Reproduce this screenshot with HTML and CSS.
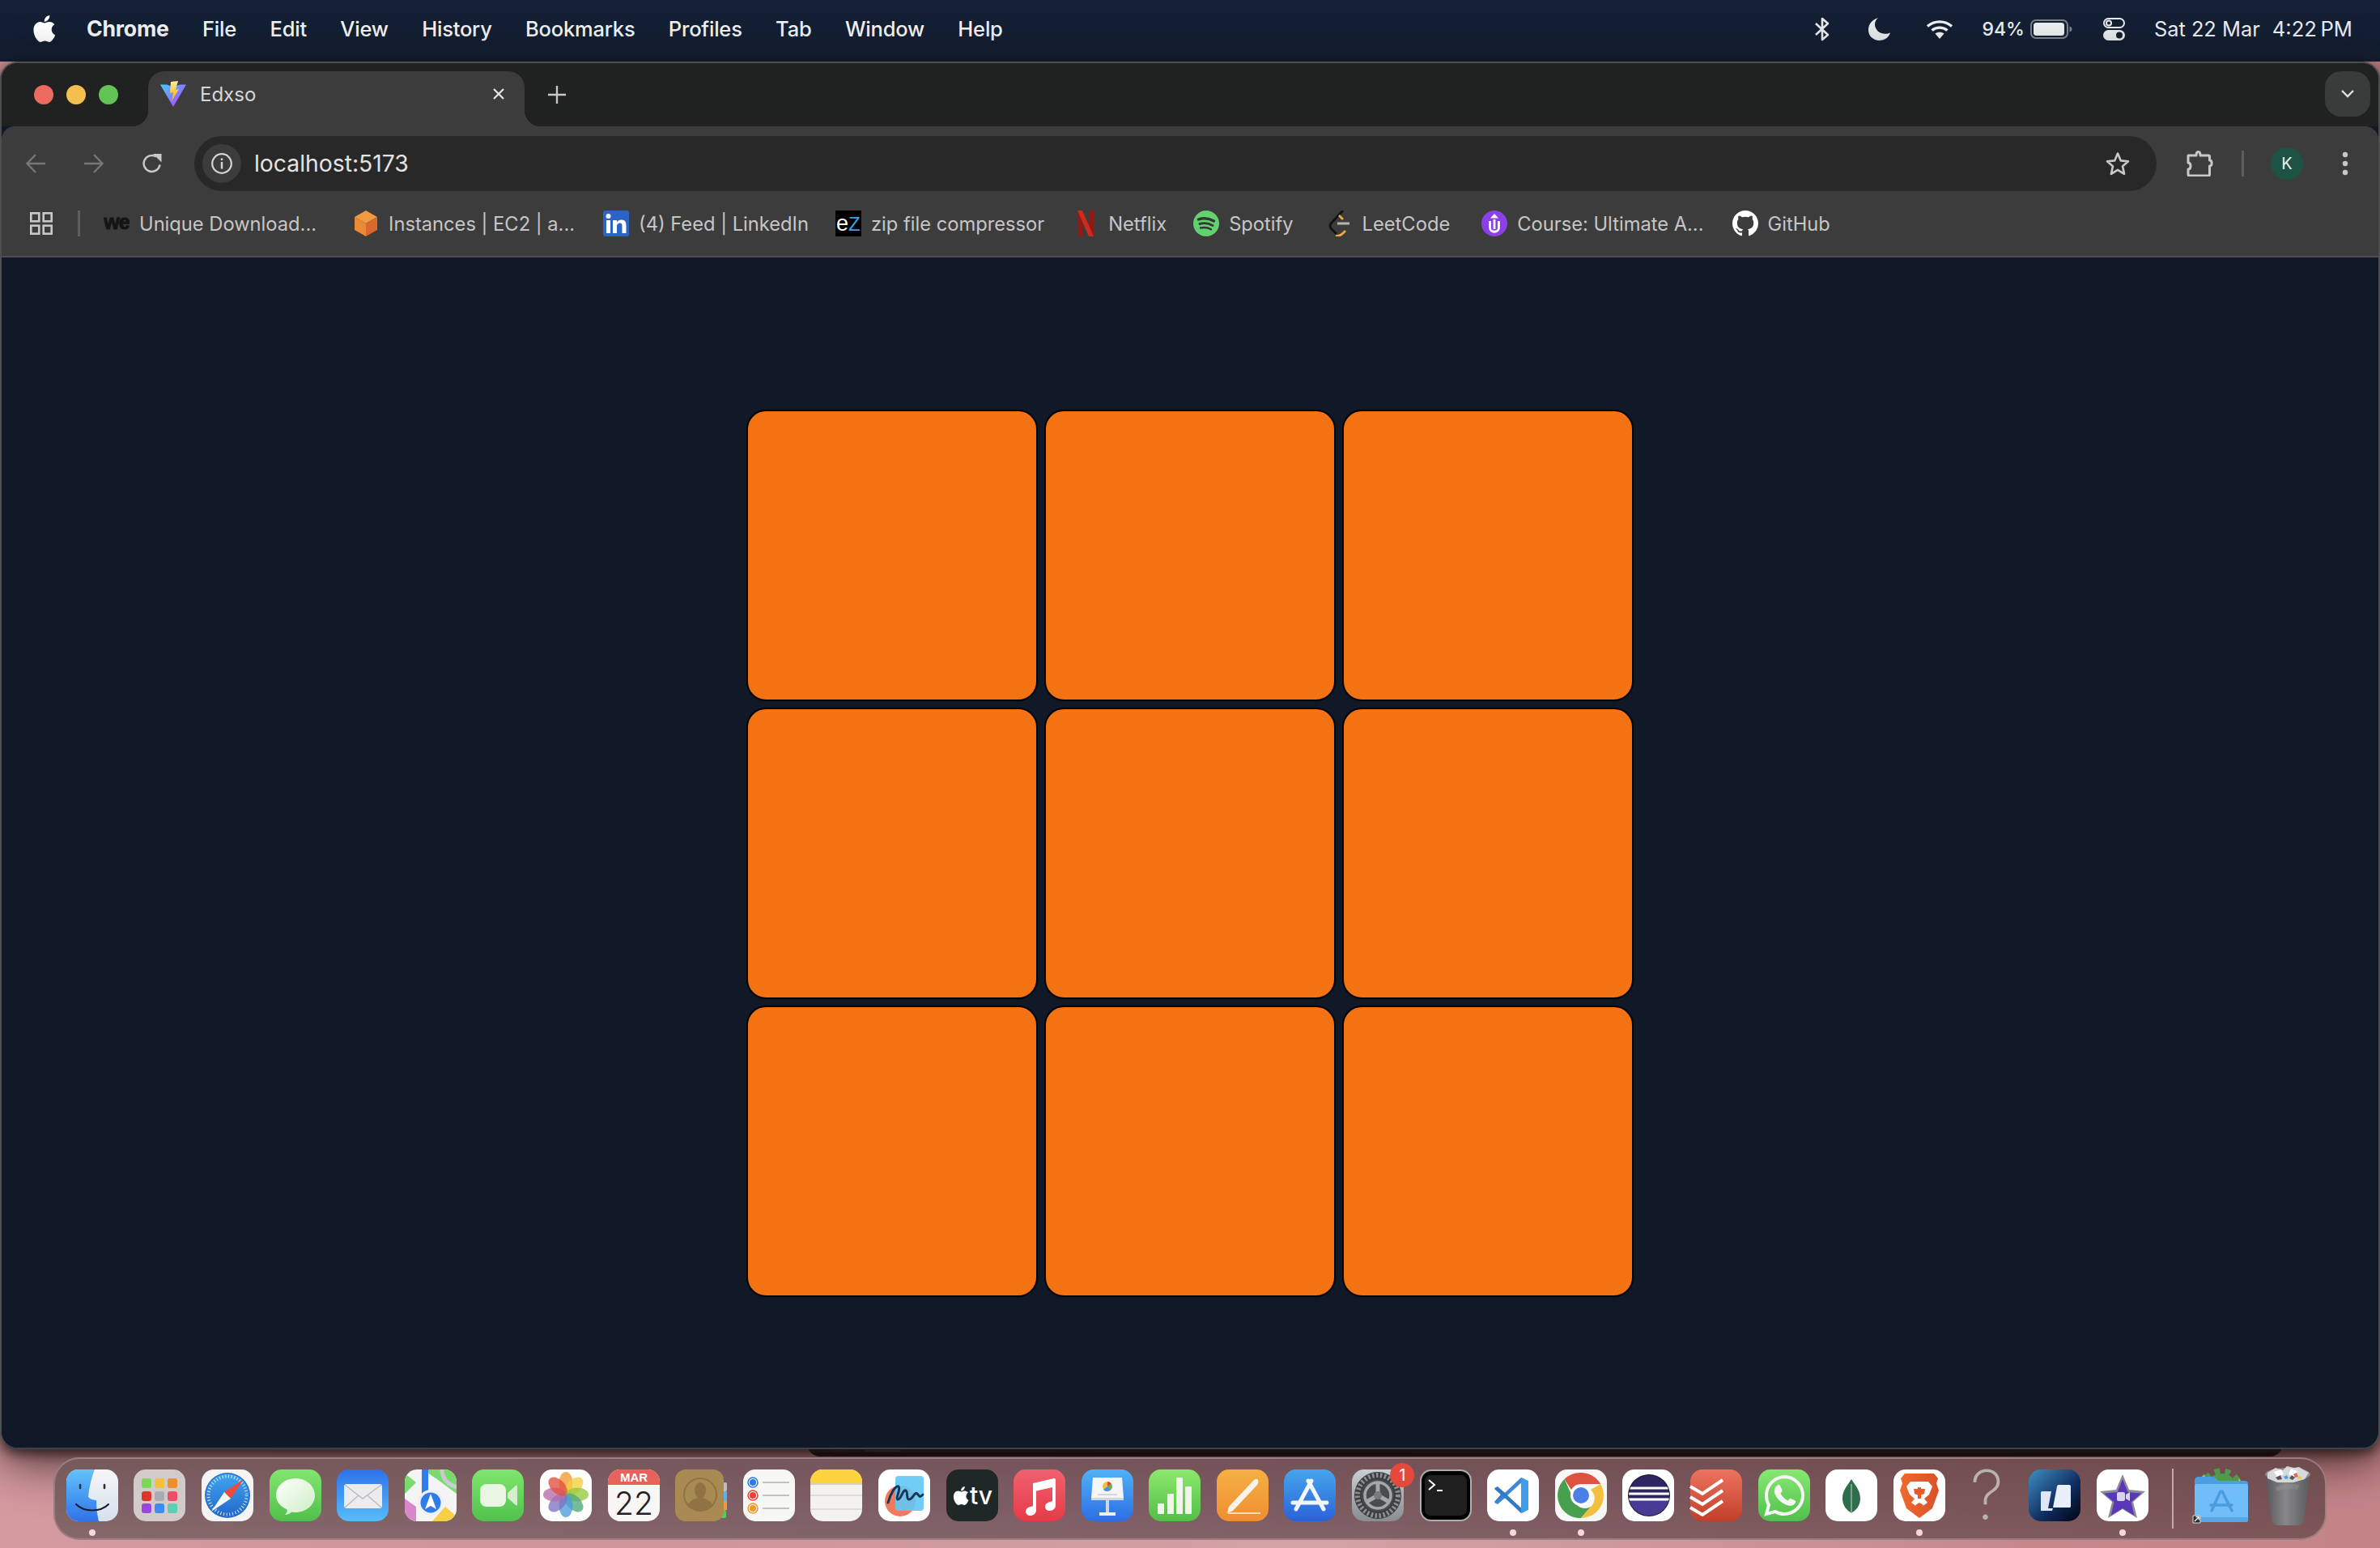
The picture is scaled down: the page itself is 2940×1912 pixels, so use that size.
FILE: index.html
```html
<!DOCTYPE html>
<html lang="en">
<head>
<meta charset="utf-8">
<title>Edxso</title>
<link rel="stylesheet" href="styles.css">
</head>
<body>
<header class="menubar">
  <svg class="apple" viewBox="3.6 2 16.4 20"><path fill="#fff" d="M18.71 19.5c-.83 1.24-1.71 2.45-3.05 2.47-1.34.03-1.77-.79-3.29-.79-1.53 0-2 .77-3.27.82-1.31.05-2.3-1.32-3.14-2.53C4.25 17 2.94 12.45 4.7 9.39c.87-1.52 2.43-2.48 4.12-2.51 1.28-.02 2.5.87 3.29.87.78 0 2.26-1.07 3.81-.91.65.03 2.47.26 3.64 1.98-.09.06-2.17 1.28-2.15 3.81.03 3.02 2.65 4.03 2.68 4.04-.03.07-.42 1.44-1.38 2.83M13 3.5c.73-.83 1.94-1.46 2.94-1.5.13 1.17-.34 2.35-1.04 3.19-.69.85-1.83 1.51-2.95 1.42-.15-1.15.41-2.35 1.05-3.11z"/></svg>
  <nav class="menu">
    <span class="menu-app">Chrome</span><span>File</span><span>Edit</span><span>View</span><span>History</span><span>Bookmarks</span><span>Profiles</span><span>Tab</span><span>Window</span><span>Help</span>
  </nav>
  <div class="status">
    <svg class="st-bt" viewBox="0 0 20 30"><path fill="none" stroke="#e8eaec" stroke-width="2.6" stroke-linejoin="round" d="M2 8l15 14-7 6V2l7 6L2 22"/></svg>
    <svg class="st-moon" viewBox="0 0 28 28"><path fill="#e8eaec" d="M12 0C5 2 0 7.500 0 15c0 7.500 6 13 13.500 13 6.500 0 11.500-3.500 13.500-9.500-2 1-4 1.300-6 1.300C13 19.800 8 14 8 8c0-3 1.500-6 4-8z"/></svg>
    <svg class="st-wifi" viewBox="0 0 34 24"><path fill="none" stroke="#f0f1f3" stroke-width="3.400" d="M2 8.500c8.500-7.500 21.500-7.500 30 0M7.500 13.500c5.500-4.500 13.500-4.500 19 0"/><path fill="#f0f1f3" d="M11.500 17.500c3-2.500 8-2.500 11 0L17 24z"/></svg>
    <span class="st-pct">94%</span>
    <svg class="st-batt" viewBox="0 0 52 24"><rect x="1" y="1" width="45" height="22" rx="6" fill="none" stroke="#7c8490" stroke-width="2"/><rect x="4" y="4" width="38" height="16" rx="3.500" fill="#eceef0"/><path fill="#7c8490" d="M48.500 8.500c2 .5 3 2 3 3.500s-1 3-3 3.500z"/></svg>
    <svg class="st-ctl" viewBox="0 0 28 28"><rect x="1" y="1" width="25" height="11" rx="5.500" fill="none" stroke="#e8eaec" stroke-width="2"/><circle cx="7" cy="6.500" r="3" fill="none" stroke="#e8eaec" stroke-width="2"/><rect y="15" width="27" height="13" rx="6.500" fill="#e8eaec"/><circle cx="20" cy="21.500" r="4" fill="#131f33"/></svg>
    <span class="st-date">Sat 22 Mar</span>
    <span class="st-time">4:22&#8201;PM</span>
  </div>
</header>

<div class="back-window"></div>

<main class="window">
  <div class="tabstrip">
    <div class="lights"><span class="light red"></span><span class="light yellow"></span><span class="light green"></span></div>
    <div class="tab">
      <svg class="fav" viewBox="0 0 32 32"><defs><linearGradient id="v1" x1="0" y1="0" x2="1" y2="1"><stop offset="0" stop-color="#41d1ff"/><stop offset="1" stop-color="#bd34fe"/></linearGradient><linearGradient id="v2" x1="0" y1="0" x2="0" y2="1"><stop offset="0" stop-color="#ffee95"/><stop offset="1" stop-color="#ffa800"/></linearGradient></defs><path fill="url(#v1)" d="M0 4.500l8 0 8 3 8-3 8 0L16 32z"/><path fill="url(#v2)" d="M13 1l9-1-3 11 4-1-9 15 2-11-4 1z"/></svg>
      <span class="tab-title">Edxso</span>
      <svg class="tab-x" viewBox="0 0 16 16"><path stroke="#e6e6e6" stroke-width="2.200" d="M2 2l12 12M14 2L2 14"/></svg>
    </div>
    <svg class="newtab" viewBox="0 0 22 22"><path stroke="#c7c7c7" stroke-width="2.400" d="M11 0v22M0 11h22"/></svg>
    <div class="tabsearch"><svg class="chev" viewBox="0 0 16 10"><path fill="none" stroke="#e0e0e0" stroke-width="2.400" d="M1 1l7 7 7-7"/></svg></div>
  </div>

  <div class="toolbar">
    <svg class="tb-ic" viewBox="0 0 24 24"><path fill="none" stroke="#747575" stroke-width="2.400" d="M24 12H2M12 1L1.500 12 12 23"/></svg>
    <svg class="tb-ic tb-fwd" viewBox="0 0 24 24"><path fill="none" stroke="#747575" stroke-width="2.400" d="M0 12h22M12 1l10.500 11L12 23"/></svg>
    <svg class="tb-ic tb-rel" viewBox="0 0 24 24"><path fill="none" stroke="#c8c8c8" stroke-width="2.500" d="M21.500 13.500A10 10 0 1 1 17 3.500"/><path fill="#c8c8c8" d="M13 0h10.500v10.500z"/></svg>
    <div class="omnibox">
      <div class="info"><svg class="info-ic" viewBox="0 0 26 26"><circle cx="13" cy="13" r="11.800" fill="none" stroke="#d4d4d4" stroke-width="2.200"/><path fill="#d4d4d4" d="M11.800 11h2.400v8.500h-2.400zM11.800 6.500h2.400V9h-2.400z"/></svg></div>
      <span class="url">localhost:5173</span>
      <svg class="star" viewBox="0 0 30 30"><path fill="none" stroke="#c8c8c8" stroke-width="2.600" stroke-linejoin="round" d="M15 2.500l3.800 8.900 9.200.8-7 6.200 2.100 9.400L15 22.800l-8.100 5 2.100-9.400-7-6.200 9.200-.8z"/></svg>
    </div>
    <svg class="ext" viewBox="0 0 33 32"><path fill="none" stroke="#c8c8c8" stroke-width="3" stroke-linejoin="round" d="M2 6h10c0-6 5-6 5 0h10c1 0 1.500.5 1.500 1.500V12c3.500 0 3.500 7 0 7v10.500c0 1-.5 1.500-1.500 1.500H3.500c-1 0-1.500-.5-1.500-1.500V23c4 0 4-8 0-8z"/></svg>
    <span class="tb-sep"></span>
    <span class="avatar">K</span>
    <svg class="kebab" viewBox="0 0 8 30"><circle cx="4" cy="4" r="3.200" fill="#c8c8c8"/><circle cx="4" cy="15" r="3.200" fill="#c8c8c8"/><circle cx="4" cy="26" r="3.200" fill="#c8c8c8"/></svg>
  </div>

  <div class="bookmarks">
    <svg class="bm-apps" viewBox="0 0 28 28"><g fill="none" stroke="#c8c8c8" stroke-width="2.600"><rect x="1.300" y="1.300" width="10" height="10"/><rect x="16.700" y="1.300" width="10" height="10"/><rect x="1.300" y="16.700" width="10" height="10"/><rect x="16.700" y="16.700" width="10" height="10"/></g></svg>
    <span class="bm-sep"></span>
    <a class="bm bm-first"><svg class="bm-ic" viewBox="0 0 32 32"><text x="16" y="23" class="fv-we">we</text></svg><span>Unique Download...</span></a>
    <a class="bm bm-wide"><svg class="bm-ic" viewBox="0 0 32 32"><path fill="#f19a40" d="M16 0l14 8-14 8L2 8z"/><path fill="#e98a37" d="M2 8l14 8v16L2 24z"/><path fill="#d9682a" d="M30 8l-14 8v16l14-8z"/></svg><span>Instances | EC2 | a...</span></a>
    <a class="bm"><svg class="bm-ic" viewBox="0 0 32 32"><rect width="32" height="32" rx="3" fill="#2a64c4"/><rect x="4" y="12" width="5" height="16" fill="#fff"/><circle cx="6.500" cy="7" r="3" fill="#fff"/><path fill="#fff" d="M12 12h5v2.500c1-2 3-3 5.500-3 5 0 6 3 6 7V28h-5v-8.500c0-2.500-.5-4-2.500-4s-4 1.500-4 4V28h-5z"/></svg><span>(4) Feed | LinkedIn</span></a>
    <a class="bm bm-narrow"><svg class="bm-ic" viewBox="0 0 32 32"><rect width="32" height="32" fill="#000"/><text x="1" y="25" class="fv-e">e</text><text x="16" y="25" class="fv-z">Z</text></svg><span>zip file compressor</span></a>
    <a class="bm"><svg class="bm-ic" viewBox="-6 0 32 32"><path fill="#8f1a14" d="M0 0h6v32H0zM14 0h6v32h-6z"/><path fill="#cf2a1e" d="M0 0h6l14 32h-6z"/></svg><span>Netflix</span></a>
    <a class="bm bm-narrow"><svg class="bm-ic" viewBox="0 0 32 32"><circle cx="16" cy="16" r="16" fill="#62d26f"/><g fill="none" stroke="#2f3a32" stroke-linecap="round"><path stroke-width="3.400" d="M6.500 11c6-2 13-1.500 19 2"/><path stroke-width="2.900" d="M8 16.500c5-1.500 11-1 16 2"/><path stroke-width="2.400" d="M9 21.500c4.500-1 9-.5 13 1.800"/></g></svg><span>Spotify</span></a>
    <a class="bm bm-mid"><svg class="bm-ic" viewBox="0 0 32 32"><path fill="none" stroke="#111" stroke-width="2.800" d="M20 0L5 16c-2 3-1 5 1 7l6 6"/><path fill="none" stroke="#f0a83c" stroke-width="2.800" d="M15 6l5 5M11 31c3 1 6 0 9-3l3-3"/><rect x="13" y="14.500" width="15" height="3" fill="#b4b4b4"/></svg><span>LeetCode</span></a>
    <a class="bm bm-course"><svg class="bm-ic" viewBox="0 0 32 32"><circle cx="16" cy="16" r="16" fill="#8b3fe6"/><path fill="none" stroke="#fff" stroke-width="2.800" d="M10.500 13v8c0 7 11 7 11 0v-8M16 11v12"/><path fill="#fff" d="M11 9.500L16 4l5 5.500z"/></svg><span>Course: Ultimate A...</span></a>
    <a class="bm"><svg class="bm-ic" viewBox="0 0 16 16"><path fill="#fff" d="M8 0C3.580 0 0 3.580 0 8c0 3.540 2.290 6.530 5.470 7.590.4.070.55-.17.55-.38 0-.19-.01-.82-.01-1.490-2.010.37-2.530-.49-2.690-.94-.09-.23-.48-.94-.82-1.130-.28-.15-.68-.52-.01-.53.63-.01 1.080.58 1.230.82.72 1.210 1.870.87 2.330.66.07-.52.28-.87.51-1.070-1.780-.2-3.640-.89-3.640-3.950 0-.87.31-1.590.82-2.150-.08-.2-.36-1.020.08-2.120 0 0 .67-.21 2.200.82.64-.18 1.320-.27 2-.27.68 0 1.360.09 2 .27 1.530-1.040 2.200-.82 2.200-.82.44 1.100.16 1.920.08 2.120.51.56.82 1.270.82 2.150 0 3.070-1.870 3.750-3.650 3.950.29.25.54.73.54 1.480 0 1.070-.01 1.930-.01 2.200 0 .21.15.46.55.38A8.013 8.013 0 0016 8c0-4.420-3.580-8-8-8z"/></svg><span>GitHub</span></a>
  </div>

  <section class="page">
    <div class="board">
      <div class="cell"></div><div class="cell"></div><div class="cell"></div>
      <div class="cell"></div><div class="cell"></div><div class="cell"></div>
      <div class="cell"></div><div class="cell"></div><div class="cell"></div>
    </div>
  </section>
</main>

<footer class="dock">
  <!-- Finder -->
  <div class="dock-item"><svg class="app" viewBox="0 0 64 64"><defs><clipPath id="r"><rect width="64" height="64" rx="15"/></clipPath><linearGradient id="fa" x1="0" y1="0" x2="0" y2="1"><stop offset="0" stop-color="#62c3fa"/><stop offset="1" stop-color="#2f72ea"/></linearGradient><linearGradient id="fb" x1="0" y1="0" x2="0" y2="1"><stop offset="0" stop-color="#f6f6f7"/><stop offset="1" stop-color="#d5e0ee"/></linearGradient></defs><rect width="64" height="64" rx="15" fill="url(#fb)"/><path clip-path="url(#r)" fill="url(#fa)" d="M0 0h35c-4 10-7 22-8 34 3 3 7 4 10 4 0 9 1 18 3 26H0z"/><path stroke="#2a3440" stroke-width="2.600" stroke-linecap="round" d="M17 19v4M47 19v4"/><path fill="none" stroke="#111d2c" stroke-width="2" stroke-linecap="round" d="M12 43c10 10 30 10 40 0"/></svg><span class="dot"></span></div>
  <!-- Launchpad -->
  <div class="dock-item"><svg class="app" viewBox="0 0 64 64"><rect width="64" height="64" rx="15" fill="#d3caca"/><rect x="10" y="11" width="12" height="12" rx="3" fill="#7cd957"/><rect x="26" y="11" width="12" height="12" rx="3" fill="#f4bf3a"/><rect x="42" y="11" width="12" height="12" rx="3" fill="#ed8f2d"/><rect x="10" y="27" width="12" height="12" rx="3" fill="#d9362c"/><rect x="26" y="27" width="12" height="12" rx="3" fill="#a9adb2"/><rect x="42" y="27" width="12" height="12" rx="3" fill="#ee4f68"/><rect x="10" y="42" width="12" height="12" rx="3" fill="#9a45dc"/><rect x="26" y="42" width="12" height="12" rx="3" fill="#3b8cf3"/><rect x="42" y="42" width="12" height="12" rx="3" fill="#5ccfb0"/></svg></div>
  <!-- Safari -->
  <div class="dock-item"><svg class="app" viewBox="0 0 64 64"><defs><linearGradient id="sf" x1="0" y1="0" x2="0" y2="1"><stop offset="0" stop-color="#3fa5f0"/><stop offset="1" stop-color="#2367c9"/></linearGradient></defs><rect width="64" height="64" rx="15" fill="#f4f4f5"/><circle cx="32" cy="32" r="28" fill="#2a70c9"/><circle cx="32" cy="32" r="26.500" fill="url(#sf)"/><circle cx="32" cy="32" r="23.500" fill="none" stroke="#d8ecfb" stroke-width="4" stroke-dasharray="1 2.700"/><path fill="#f04a3a" d="M52 12L36 36l-8-8z"/><path fill="#f6f6f6" d="M12 52l16-24 8 8z"/></svg></div>
  <!-- Messages -->
  <div class="dock-item"><svg class="app" viewBox="0 0 64 64"><defs><linearGradient id="ms" x1="0" y1="0" x2="0" y2="1"><stop offset="0" stop-color="#82e670"/><stop offset="1" stop-color="#50c04b"/></linearGradient><linearGradient id="mb" x1="0" y1="0" x2="1" y2="1"><stop offset="0" stop-color="#fff"/><stop offset="1" stop-color="#cdeec4"/></linearGradient></defs><rect width="64" height="64" rx="15" fill="url(#ms)"/><path fill="url(#mb)" d="M32 11c13 0 24 9 24 21 0 12-11 21-24 21-2 0-3 0-5-.5-2 2-5 3.500-8 3.500 2-2 3-4 2.500-6.500C14 46 8 40 8 32c0-12 11-21 24-21z"/></svg></div>
  <!-- Mail -->
  <div class="dock-item"><svg class="app" viewBox="0 0 64 64"><defs><linearGradient id="ml" x1="0" y1="0" x2="0" y2="1"><stop offset="0" stop-color="#2d72ea"/><stop offset="1" stop-color="#58bdf9"/></linearGradient></defs><rect width="64" height="64" rx="15" fill="url(#ml)"/><rect x="9" y="18" width="47" height="30" rx="3" fill="#ececee"/><path fill="none" stroke="#b9bcc2" stroke-width="1.500" d="M10 19l22 17 23-17M10 47l17-15M55 47L38 32"/></svg></div>
  <!-- Maps -->
  <div class="dock-item"><svg class="app" viewBox="0 0 64 64"><defs><clipPath id="mp"><rect width="64" height="64" rx="15"/></clipPath></defs><g clip-path="url(#mp)"><rect width="64" height="64" fill="#f4f4f4"/><path fill="#79db6e" d="M0 0h64v30L40 12 22 0zM0 5l14 11L0 30z"/><path fill="#d987c8" d="M0 36l14 10v18H0z"/><path fill="#f5cf45" d="M34 64l16-18 14 12v6z"/><path fill="none" stroke="#c9cbd0" stroke-width="5" d="M46 0c0 10 6 18 18 22"/><path stroke="#2f7cec" stroke-width="8" d="M25 0v30"/><circle cx="32" cy="41" r="16" fill="#eef0f3"/><circle cx="32" cy="41" r="12.500" fill="#2f7cec"/><path fill="#fff" d="M32 30l7 19-7-4-7 4z"/></g></svg></div>
  <!-- FaceTime -->
  <div class="dock-item"><svg class="app" viewBox="0 0 64 64"><defs><linearGradient id="ft" x1="0" y1="0" x2="0" y2="1"><stop offset="0" stop-color="#7fe66f"/><stop offset="1" stop-color="#50c24c"/></linearGradient></defs><rect width="64" height="64" rx="15" fill="url(#ft)"/><rect x="10" y="18" width="32" height="28" rx="8" fill="#e9f6e4"/><path fill="#d6eecf" d="M44 29l10-9c1-1 2 0 2 1v22c0 1-1 2-2 1l-10-9z"/></svg></div>
  <!-- Photos -->
  <div class="dock-item"><svg class="app" viewBox="0 0 64 64"><rect width="64" height="64" rx="15" fill="#fdfdfd"/><g fill-opacity=".78"><ellipse cx="32" cy="17" rx="8.500" ry="14" fill="#f29a2e"/><ellipse cx="32" cy="17" rx="8.500" ry="14" fill="#f4d03f" transform="rotate(45 32 31)"/><ellipse cx="32" cy="17" rx="8.500" ry="14" fill="#95c83f" transform="rotate(90 32 31)"/><ellipse cx="32" cy="17" rx="8.500" ry="14" fill="#4eaa78" transform="rotate(135 32 31)"/><ellipse cx="32" cy="17" rx="8.500" ry="14" fill="#4f9bdc" transform="rotate(180 32 31)"/><ellipse cx="32" cy="17" rx="8.500" ry="14" fill="#7a74be" transform="rotate(225 32 31)"/><ellipse cx="32" cy="17" rx="8.500" ry="14" fill="#b76aa8" transform="rotate(270 32 31)"/><ellipse cx="32" cy="17" rx="8.500" ry="14" fill="#e2513f" transform="rotate(315 32 31)"/></g></svg></div>
  <!-- Calendar -->
  <div class="dock-item"><svg class="app" viewBox="0 0 64 64"><defs><clipPath id="cl"><rect width="64" height="64" rx="15"/></clipPath></defs><g clip-path="url(#cl)"><rect width="64" height="64" fill="#f8f7f5"/><rect width="64" height="19" fill="#e8615a"/></g><text x="32" y="15" class="cal-mon">MAR</text><text x="32" y="56" class="cal-day">22</text></svg></div>
  <!-- Contacts -->
  <div class="dock-item"><svg class="app" viewBox="0 0 64 64"><rect x="56" y="16" width="8" height="11" rx="2" fill="#bdbdbd"/><rect x="56" y="27" width="8" height="12" fill="#5ab2ee"/><rect x="56" y="39" width="8" height="11" fill="#ef9a33"/><rect x="56" y="50" width="7" height="10" rx="2" fill="#5ec75c"/><rect width="60" height="64" rx="13" fill="#a98a52"/><circle cx="31" cy="31" r="20" fill="none" stroke="#8f7345" stroke-width="2"/><ellipse cx="31" cy="26" rx="7" ry="10" fill="#8f7345"/><path fill="#8f7345" d="M15 45c4-8 11-10 16-10s12 2 16 10c-8 8-24 8-32 0z"/></svg></div>
  <!-- Reminders -->
  <div class="dock-item"><svg class="app" viewBox="0 0 64 64"><rect width="64" height="64" rx="15" fill="#f7f7f6"/><g fill="none" stroke-width="1.500"><circle cx="12" cy="16" r="6" stroke="#2d78ea"/><circle cx="12" cy="32" r="6" stroke="#e8433a"/><circle cx="12" cy="48" r="6" stroke="#ee9a26"/></g><circle cx="12" cy="16" r="4" fill="#2d78ea"/><circle cx="12" cy="32" r="4" fill="#e8433a"/><circle cx="12" cy="48" r="4" fill="#ee9a26"/><path stroke="#c3c3c3" stroke-width="2" d="M24 16h33M24 32h33M24 48h33"/></svg></div>
  <!-- Notes -->
  <div class="dock-item"><svg class="app" viewBox="0 0 64 64"><defs><clipPath id="nt"><rect width="64" height="64" rx="15"/></clipPath></defs><g clip-path="url(#nt)"><rect width="64" height="64" fill="#f3f2ee"/><rect width="64" height="17" fill="#fdd33f"/><rect y="17" width="64" height="2" fill="#d8d2bc"/><path stroke="#d5d5d3" stroke-width="1.500" d="M0 32h64M0 49h64"/></g></svg></div>
  <!-- Freeform -->
  <div class="dock-item"><svg class="app" viewBox="0 0 64 64"><rect width="64" height="64" rx="15" fill="#fff"/><circle cx="27" cy="39" r="19" fill="#ef7a5c"/><rect x="21" y="8" width="35" height="43" rx="4" fill="#62c8f4" fill-opacity=".9"/><path fill="none" stroke="#17345a" stroke-width="3" stroke-linecap="round" d="M12 41c3-12 10-22 13-20 3 3-4 15-1 16 4 1 6-13 10-11 3 2 0 11 4 11 5-1 7-10 10-7 3 2 2 6 7 1"/></svg></div>
  <!-- TV -->
  <div class="dock-item"><svg class="app" viewBox="0 0 64 64"><rect width="64" height="64" rx="15" fill="#1f2826"/><svg x="8" y="21" width="20" height="23" viewBox="3.600 2 16.400 20"><path fill="#fff" d="M18.710 19.500c-.83 1.240-1.710 2.450-3.050 2.470-1.340.03-1.770-.79-3.290-.79-1.530 0-2 .77-3.270.82-1.310.05-2.300-1.320-3.140-2.530C4.250 17 2.940 12.450 4.700 9.390c.87-1.520 2.430-2.480 4.120-2.510 1.280-.02 2.500.87 3.290.87.78 0 2.260-1.070 3.810-.91.65.03 2.470.26 3.640 1.980-.09.06-2.170 1.280-2.150 3.810.03 3.020 2.650 4.030 2.680 4.040-.03.07-.42 1.440-1.380 2.830M13 3.500c.73-.83 1.940-1.460 2.940-1.500.13 1.170-.34 2.350-1.040 3.190-.69.85-1.830 1.510-2.950 1.420-.15-1.150.41-2.350 1.050-3.110z"/></svg><text x="29" y="43" class="tv-t">tv</text></svg></div>
  <!-- Music -->
  <div class="dock-item"><svg class="app" viewBox="0 0 64 64"><defs><linearGradient id="mu" x1="0" y1="0" x2="0" y2="1"><stop offset="0" stop-color="#f0616f"/><stop offset="1" stop-color="#e63a48"/></linearGradient></defs><rect width="64" height="64" rx="15" fill="url(#mu)"/><path fill="#fff" d="M24 17l26-6c1 0 2 .5 2 2v31c0 4-3 7-7 7-3.500 0-6-2-6-5 0-3 2-5 6-6l3-.8V22l-20 4.500V50c0 4-3 7-7 7-3.500 0-6-2-6-5 0-3 2-5 6-6l3-.8z"/></svg></div>
  <!-- Keynote -->
  <div class="dock-item"><svg class="app" viewBox="0 0 64 64"><defs><linearGradient id="kn" x1="0" y1="0" x2="0" y2="1"><stop offset="0" stop-color="#4fb3f6"/><stop offset="1" stop-color="#2d6de4"/></linearGradient></defs><rect width="64" height="64" rx="15" fill="url(#kn)"/><path fill="#f4f5f7" d="M14 10h36l2 25H12z"/><path fill="#cfd5dd" d="M12 35h40v3H12zM30 38h4v15h-4z"/><path fill="#eef0f3" d="M22 53h20v4H22z"/><circle cx="32" cy="21" r="6" fill="#e5c33e"/><path fill="#e0453c" d="M32 21v-6a6 6 0 0 1 5 3z"/><path fill="#5bb84d" d="M32 21l5-3a6 6 0 0 1-1 7z"/><path fill="#4b8ee8" d="M32 21l4 4a6 6 0 0 1-9 0z"/><path stroke="#c9cdd3" stroke-width="1.500" d="M20 31h24"/></svg></div>
  <!-- Numbers -->
  <div class="dock-item"><svg class="app" viewBox="0 0 64 64"><defs><linearGradient id="nm" x1="0" y1="0" x2="0" y2="1"><stop offset="0" stop-color="#8ce86e"/><stop offset="1" stop-color="#52bf46"/></linearGradient></defs><rect width="64" height="64" rx="15" fill="url(#nm)"/><rect x="11" y="42" width="8" height="13" rx="1" fill="#eef6e8"/><rect x="23" y="30" width="8" height="25" rx="1" fill="#eef6e8"/><rect x="34" y="10" width="8" height="45" rx="1" fill="#eef6e8"/><rect x="45" y="21" width="8" height="34" rx="1" fill="#eef6e8"/></svg></div>
  <!-- Pages -->
  <div class="dock-item"><svg class="app" viewBox="0 0 64 64"><defs><linearGradient id="pg" x1="0" y1="0" x2="0" y2="1"><stop offset="0" stop-color="#f5b044"/><stop offset="1" stop-color="#ef8e32"/></linearGradient></defs><rect width="64" height="64" rx="15" fill="url(#pg)"/><path fill="#f8f4ec" d="M46 13c2-2 4-1 5 0 .5 2 .5 4-1 6L20 51l-7 3 2-8z"/><path stroke="#fadcae" stroke-width="2" d="M14 54h40"/></svg></div>
  <!-- App Store -->
  <div class="dock-item"><svg class="app" viewBox="0 0 64 64"><defs><linearGradient id="as" x1="0" y1="0" x2="0" y2="1"><stop offset="0" stop-color="#46a5ec"/><stop offset="1" stop-color="#2a62d8"/></linearGradient></defs><rect width="64" height="64" rx="15" fill="url(#as)"/><path stroke="#f2f6fb" stroke-width="5" stroke-linecap="round" d="M30 14l19 35M34 14L15 49M11 41h42"/></svg></div>
  <!-- Settings -->
  <div class="dock-item"><svg class="app" viewBox="0 0 64 64"><defs><linearGradient id="st" x1="0" y1="0" x2="0" y2="1"><stop offset="0" stop-color="#c9cfd4"/><stop offset="1" stop-color="#8a8c8f"/></linearGradient></defs><rect width="64" height="64" rx="15" fill="url(#st)"/><circle cx="32" cy="32" r="29" fill="#3c3d3f"/><circle cx="32" cy="32" r="25" fill="none" stroke="#8d8f92" stroke-width="6" stroke-dasharray="2.500 2.500"/><circle cx="32" cy="32" r="20" fill="#4a4b4d"/><circle cx="32" cy="32" r="16" fill="none" stroke="#a4a6a8" stroke-width="3.500"/><path stroke="#a4a6a8" stroke-width="5" d="M32 32V16M32 32l14 8M32 32l-14 8"/><circle cx="32" cy="32" r="5" fill="#77797b"/></svg><span class="badge">1</span></div>
  <!-- Terminal -->
  <div class="dock-item"><svg class="app" viewBox="0 0 64 64"><rect width="64" height="64" rx="14" fill="#aab0b3"/><rect x="2" y="2" width="60" height="60" rx="12" fill="#000"/><rect x="6" y="7" width="52" height="50" rx="7" fill="#1f1f1f"/><path fill="none" stroke="#fff" stroke-width="2" d="M11 13l7 6-7 6"/><path stroke="#fff" stroke-width="2" d="M21 26h7"/></svg></div>
  <!-- VS Code -->
  <div class="dock-item"><svg class="app" viewBox="0 0 64 64"><rect width="64" height="64" rx="15" fill="#fff"/><path fill="#2f6eb8" d="M9 24l4-2 12 9 0 2-12 9-4-2 8-9z"/><path fill="#3c88d4" d="M9 41l4 2 34-31-5-2z" /><path fill="#2f7cc6" d="M9 23l4-2 34 31-5 2z"/><path fill="#3f9ce8" d="M42 10l9 4v36l-9 4z"/></svg><span class="dot"></span></div>
  <!-- Chrome -->
  <div class="dock-item"><svg class="app" viewBox="0 0 64 64"><rect width="64" height="64" rx="15" fill="#f7f7f7"/><path fill="#dc5340" d="M32 4a28 28 0 0 1 24.200 14H32a14 14 0 0 0-12.100 7L11.500 12A28 28 0 0 1 32 4z"/><path fill="#46a04d" d="M11.500 12l12.300 27A14 14 0 0 0 44.100 46L32 60A28 28 0 0 1 11.500 12z"/><path fill="#f2bf3f" d="M56.200 18A28 28 0 0 1 32 60l12.100-14A14 14 0 0 0 44 25z"/><circle cx="32" cy="32" r="13" fill="#fff"/><circle cx="32" cy="32" r="10" fill="#4a80e6"/></svg><span class="dot"></span></div>
  <!-- Eclipse -->
  <div class="dock-item"><svg class="app" viewBox="0 0 64 64"><defs><clipPath id="ec"><circle cx="33" cy="32" r="25"/></clipPath></defs><rect width="64" height="64" rx="15" fill="#fff"/><path fill="#eba14a" d="M31 5a27 27 0 0 0 0 54 27 27 0 0 1 0-54z"/><circle cx="33" cy="32" r="26" fill="#1c1a35"/><g clip-path="url(#ec)"><circle cx="33" cy="32" r="25" fill="#2c2663"/><rect x="6" y="35" width="54" height="22" fill="#473b96"/><path stroke="#fff" stroke-width="3" d="M6 23h54M6 30h54M6 37h54"/></g></svg></div>
  <!-- Todoist -->
  <div class="dock-item"><svg class="app" viewBox="0 0 64 64"><defs><linearGradient id="td" x1="0" y1="0" x2="0" y2="1"><stop offset="0" stop-color="#ec7360"/><stop offset="1" stop-color="#c23f28"/></linearGradient></defs><rect width="64" height="64" rx="15" fill="url(#td)"/><path fill="none" stroke="#fff" stroke-width="4" d="M0 21l15 9 25-17M0 34l15 9 25-17M0 47l15 9 25-17"/></svg></div>
  <!-- WhatsApp -->
  <div class="dock-item"><svg class="app" viewBox="0 0 64 64"><defs><linearGradient id="wa" x1="0" y1="0" x2="0" y2="1"><stop offset="0" stop-color="#86e873"/><stop offset="1" stop-color="#52bf4c"/></linearGradient></defs><rect width="64" height="64" rx="15" fill="url(#wa)"/><path fill="none" stroke="#f5f7f3" stroke-width="4" d="M32 9a23 23 0 0 1 0 46c-4 0-8-1-11-3l-11 3 3-11c-2-3.500-3-7.500-3-12a23 23 0 0 1 22-23z"/><path fill="#f5f7f3" d="M24 19c1.500-.5 2.500 0 3 1l2.500 5.500c.3 1 0 1.800-2 4 1.500 3.500 5 7 9 9 2-2.500 3-3 4-2.500l5 2.500c1 .5 1 2-.5 4-3 3-7 3-12 .5-6.500-3-11-8.500-12.500-13-1.500-4.500 0-8.500 3.500-10.500z"/></svg></div>
  <!-- MongoDB -->
  <div class="dock-item"><svg class="app" viewBox="0 0 64 64"><rect width="64" height="64" rx="15" fill="#fff"/><path fill="#2f6d4d" d="M32 12c4 7 11 13 11 24 0 9-6 15-10 17l-1 1-1-1c-4-2-10-8-10-17 0-11 7-17 11-24z"/><path stroke="#bcd8c6" stroke-width="1" d="M32 18v36"/></svg></div>
  <!-- Brave -->
  <div class="dock-item"><svg class="app" viewBox="0 0 64 64"><defs><linearGradient id="br" x1="0" y1="0" x2="1" y2="0"><stop offset="0" stop-color="#f06a2e"/><stop offset="1" stop-color="#d9512a"/></linearGradient></defs><rect width="64" height="64" rx="15" fill="#fff"/><path fill="url(#br)" d="M14 5h36l5 6-2 6 3 9-8 22-16 12-16-12L8 26l3-9-2-6z"/><path fill="#fff" d="M21 15h22l5 6-4 10-6 5 4 5-10 7-10-7 4-5-6-5-4-10z"/><path fill="#e8592b" d="M25 24h6v8l-5-2zM33 24h6l-1 6-5 2zM27 44l5-3 5 3-5 6z"/><path fill="#e8592b" d="M30 22h4v14h-4z"/></svg><span class="dot"></span></div>
  <!-- Missing app -->
  <div class="dock-item"><span class="missing">?</span></div>
  <!-- Windows App -->
  <div class="dock-item"><svg class="app" viewBox="0 0 64 64"><defs><linearGradient id="wi" x1="0" y1="0" x2="1" y2="1"><stop offset="0" stop-color="#3f8fc4"/><stop offset=".6" stop-color="#0f2a5c"/><stop offset="1" stop-color="#02040f"/></linearGradient></defs><rect width="64" height="64" rx="15" fill="url(#wi)"/><path fill="#dfe6f7" d="M15 29c0-1.500 1-2 2-2h11l-4 21h6l-1 3H15z"/><path fill="#e9eefb" d="M30 47l5-26c.3-1.500 1-2 2.500-2H50c1.500 0 2 1 2 2v24c0 1.500-.5 2-2 2z"/></svg></div>
  <!-- iMovie -->
  <div class="dock-item"><svg class="app" viewBox="0 0 64 64"><rect width="64" height="64" rx="15" fill="#fff"/><path fill="#8b8b95" d="M32 6l8 19 20 2-15 13 5 20-18-11-18 11 5-20L4 27l20-2z"/><path fill="#5a37b8" d="M32 12l6.500 16 16.500 1.500-12.500 11 4 16.500L32 48l-14.500 9 4-16.500L9 29.500 25.500 28z"/><rect x="25" y="28" width="10" height="11" rx="2" fill="#d9d4ee"/><path fill="#d9d4ee" d="M36 31l5-3v11l-5-3z"/></svg><span class="dot"></span></div>
  <span class="dock-sep"></span>
  <!-- Applications folder -->
  <div class="dock-item"><svg class="app app-wide" viewBox="0 0 66 68"><circle cx="33" cy="29" r="21" fill="#4f9a4c"/><circle cx="33" cy="29" r="24" fill="none" stroke="#4f9a4c" stroke-width="7" stroke-dasharray="6.500 6.500"/><path fill="#8fc46a" d="M6 14l6-5 3 7zM55 14l4 5-7 1z"/><path fill="#4a9fe2" d="M0 17c0-3 2-5 5-5h17c4 0 5 5 9 5h31c3 0 4 2 4 4v8H0z"/><rect y="21" width="66" height="47" rx="3" fill="#70bdf8"/><rect y="62" width="66" height="6" rx="3" fill="#58a6e6"/><path fill="none" stroke="#4b9be0" stroke-width="3.500" stroke-linecap="round" d="M34 30l12 24M32 30L21 54M20 47h26"/><path fill="#2b2b2d" stroke="#dcdcdc" stroke-width="1" d="M-2 60h9v9H-2z"/><path fill="none" stroke="#eee" stroke-width="1.500" d="M0 67l5-5M1.500 61.500H5.500v4"/></svg></div>
  <!-- Trash -->
  <div class="dock-item dock-trash"><svg class="app app-trash" viewBox="0 0 58 74"><defs><linearGradient id="tr" x1="0" y1="0" x2="1" y2="0"><stop offset="0" stop-color="#57575a"/><stop offset=".45" stop-color="#87878a"/><stop offset="1" stop-color="#5a5a5d"/></linearGradient></defs><path fill="url(#tr)" d="M1 9l8 58c.5 4 3 7 8 7h24c5 0 7.500-3 8-7l8-58z"/><path fill="#8f9092" fill-opacity=".5" d="M14 27c10-5 20-5 30-3l-3 6c-8-2-17-1-25 2z"/><ellipse cx="29" cy="11" rx="28" ry="8" fill="#8c8c8e"/><path fill="#d7d8d9" d="M4 9L14 3l9 3 5-5 9 2 6-1 12 7-5 8-14 4-20 0-12-5z"/><path fill="#fff" d="M12 8l9-3 3 6-8 3zM33 4l8 3-4 7-7-3z"/><path fill="#55555a" d="M14 15l6-3 2 5-5 1zM31 16l3-4 4 3-3 3z"/><path fill="#e26a5a" d="M36 11l4-2 2 5-4 1z"/><path fill="#4fa0e0" d="M24 14l4-2 2 4-4 1z"/><path fill="#e8c24a" d="M41 14l4-1 1 3-4 1z"/></svg></div>
</footer>
</body>
</html>
```

FILE: styles.css
```css
* { box-sizing: border-box; }
html, body { margin: 0; height: 100%; }
body {
  width: 2940px;
  height: 1912px;
  overflow: hidden;
  position: relative;
  font-family: Inter, "Liberation Sans", sans-serif;
  color: #fff;
  background:
    radial-gradient(ellipse 900px 120px at 1600px 1912px, #d3a3a6 0%, rgba(211,163,166,0) 100%),
    linear-gradient(90deg, #d49aa0 0%, #c98d91 50%, #c48589 100%);
}

/* macOS menu bar */
.menubar {
  height: 76px;
  background: #131f33;
  display: flex;
  align-items: center;
  padding: 0 34px 1px 41px;
  font-size: 25.500px;
}
.apple { width: 27px; height: 33px; margin-top: -4px; }
.menu { display: flex; margin-left: 39px; gap: 41.400px; font-weight: 500; letter-spacing: -0.2px; color: #f2f3f4; margin-top: -4px; }
.menu-app { font-weight: 700; font-size: 26.600px; line-height: 31px; }
.status { margin-left: auto; display: flex; align-items: center; margin-top: -4px; color: #eceef0; }
.st-bt { width: 20px; height: 30px; }
.st-moon { width: 28px; height: 28px; margin-left: 47px; }
.st-wifi { width: 34px; height: 24px; margin-left: 43px; }
.st-pct { font-size: 23px; font-weight: 500; margin-left: 35px; }
.st-batt { width: 52px; height: 24px; margin-left: 7px; }
.st-ctl { width: 28px; height: 28px; margin-left: 38px; }
.st-date { margin-left: 35px; font-size: 25.400px; }
.st-time { margin-left: 15px; font-size: 25.600px; }

/* a second window peeking out under Chrome */
.back-window {
  position: absolute;
  left: 997px;
  top: 1780px;
  width: 1823px;
  height: 19px;
  border-radius: 0 0 16px 16px;
  background:
    linear-gradient(#6a3a34, #6a3a34) 32px 11px / 18px 2px no-repeat,
    linear-gradient(#5c5c5c, #5c5c5c) 72px 11px / 44px 2px no-repeat,
    linear-gradient(180deg, #303232 0 14px, #1f1a1a 14px);
}

/* Chrome window */
.window {
  position: relative;
  height: 1714px;
  border: 2px solid #4c4e50;
  border-bottom-color: #3b4252;
  border-radius: 22px;
  overflow: hidden;
  display: flex;
  flex-direction: column;
  background: #111827;
  box-shadow: 0 6px 14px rgba(20, 8, 8, 0.6), 0 14px 60px rgba(25, 10, 10, 0.8);
}
.tabstrip {
  height: 78px;
  flex: none;
  background: #202221;
  display: flex;
  align-items: flex-start;
}
.lights { display: flex; gap: 16px; margin: 27px 0 0 40px; }
.light { width: 24px; height: 24px; border-radius: 50%; }
.red { background: #ed6a5f; }
.yellow { background: #f5bf4f; }
.green { background: #61c454; }
.tab {
  position: relative;
  width: 465px;
  height: 68px;
  margin: 10px 0 0 37px;
  background: #3c3c3c;
  border-radius: 20px 20px 0 0;
  display: flex;
  align-items: center;
  padding: 0 24px 12px 15px;
}
.tab::before, .tab::after {
  content: "";
  position: absolute;
  bottom: 0;
  width: 20px;
  height: 20px;
}
.tab::before { left: -20px; background: radial-gradient(circle at 0 0, transparent 20px, #3c3c3c 20.5px); }
.tab::after { right: -20px; background: radial-gradient(circle at 100% 0, transparent 20px, #3c3c3c 20.5px); }
.fav { width: 32px; height: 32px; }
.tab-title { font-size: 24px; margin-left: 17px; color: #d6d6d6; }
.tab-x { width: 16px; height: 16px; margin-left: auto; }
.newtab { width: 22px; height: 22px; margin: 28px 0 0 29px; }
.tabsearch {
  width: 56px;
  height: 56px;
  margin: 10px 10px 0 auto;
  border-radius: 20px;
  background: #3a3b3b;
  display: flex;
  align-items: center;
  justify-content: center;
}
.chev { width: 16px; height: 10px; }

.toolbar {
  height: 92px;
  flex: none;
  background: #3c3c3c;
  border-radius: 16px 16px 0 0;
  display: flex;
  align-items: center;
  padding: 0 0 0 30px;
}
.tb-ic { width: 24px; height: 24px; }
.tb-fwd { margin-left: 48px; }
.tb-rel { margin-left: 48px; }
.omnibox {
  width: 2424px;
  height: 68px;
  margin-left: 40px;
  background: #282828;
  border-radius: 34px;
  display: flex;
  align-items: center;
  padding: 0 33px 0 10px;
}
.info {
  width: 48px;
  height: 48px;
  border-radius: 50%;
  background: #3c3c3c;
  display: flex;
  align-items: center;
  justify-content: center;
}
.info-ic { width: 26px; height: 26px; }
.url { font-size: 28.300px; margin-left: 16px; color: #e3e3e3; }
.star { width: 30px; height: 30px; margin-left: auto; }
.ext { width: 33px; height: 32px; margin-left: 37px; }
.tb-sep { width: 3px; height: 32px; background: #5e5e5e; margin-left: 35px; }
.avatar {
  width: 40px;
  height: 40px;
  border-radius: 50%;
  background: #1e5245;
  margin-left: 33px;
  display: flex;
  align-items: center;
  justify-content: center;
  font-size: 20px;
  color: #e8f0ec;
}
.kebab { width: 8px; height: 30px; margin-left: 48px; }

.bookmarks {
  height: 70px;
  flex: none;
  background: #3c3c3c;
  border-bottom: 2px solid #4b4f4f;
  display: flex;
  align-items: center;
  padding: 0 0 12px 35px;
  font-size: 23.700px;
  color: #c6c6c6;
}
.bm-apps { width: 28px; height: 28px; }
.bm-sep { width: 3px; height: 32px; background: #5e5e5e; margin-left: 31px; }
.bm { display: flex; align-items: center; gap: 12px; margin-left: 35px; white-space: nowrap; }
.bm-first { margin-left: 29px; }
.bm-wide { margin-left: 45px; }
.bm-mid { margin-left: 41px; }
.bm-narrow { margin-left: 33px; }
.bm-course { margin-left: 39px; }
.bm-ic { width: 32px; height: 32px; flex: none; }
.fv-we { font-family: "Liberation Sans", sans-serif; font-weight: 700; font-size: 25px; letter-spacing: -1px; text-anchor: middle; fill: #141414; stroke: #141414; stroke-width: 1; }
.fv-e { font-family: "Liberation Sans", sans-serif; font-size: 27px; fill: #fff; }
.fv-z { font-family: "Liberation Sans", sans-serif; font-size: 24px; fill: #3aa0e8; }

.page {
  flex: 1;
  background: #111827;
  display: flex;
  align-items: center;
  justify-content: center;
  padding-top: 2px;
}
.board { display: grid; grid-template-columns: repeat(3, 360px); grid-auto-rows: 360px; gap: 8px; }
.cell { background: #f37313; border: 2px solid #000; border-radius: 24px; }

/* Dock */
.dock {
  position: relative;
  width: 2808px;
  height: 102px;
  margin: 10px auto 0;
  padding: 13px 0 0 4px;
  display: flex;
  align-items: flex-start;
  border-radius: 32px;
  border: 2px solid rgba(160, 132, 134, 0.85);
  background:
    linear-gradient(180deg, rgba(50, 20, 20, 0.18), rgba(255, 255, 255, 0)),
    linear-gradient(90deg, #86686b 0%, #83636a 40%, #7d575a 100%);
}
.dock-item {
  position: relative;
  width: 83.600px;
  height: 84px;
  flex: none;
  display: flex;
  flex-direction: column;
  align-items: center;
}
.app { width: 64px; height: 64px; flex: none; overflow: visible; }
.app-wide { width: 66px; height: 68px; margin-top: -3px; }
.app-trash { width: 58px; height: 74px; margin-top: -5px; }
.dot { width: 8px; height: 8px; border-radius: 50%; background: #f9d7db; margin-top: 10px; }
.badge {
  position: absolute;
  top: -8px;
  left: 57px;
  width: 30px;
  height: 30px;
  border-radius: 50%;
  background: #e5493c;
  color: #fff;
  font-size: 20px;
  display: flex;
  align-items: center;
  justify-content: center;
}
.dock-sep { width: 2px; height: 74px; background: #c9a7a9; margin: -1px 17px 0 20px; flex: none; }
.dock-trash { margin-left: -2px; }
.missing {
  font-family: Inter, sans-serif;
  font-size: 84px;
  font-weight: 200;
  line-height: 64px;
  color: #bab1b1;
}
.cal-mon { font-family: "Liberation Sans", sans-serif; font-size: 15px; font-weight: 700; fill: #fff; text-anchor: middle; }
.cal-day { font-family: Inter, sans-serif; font-size: 39px; font-weight: 300; fill: #222; text-anchor: middle; }
.tv-t { font-family: Inter, sans-serif; font-size: 30px; font-weight: 500; fill: #fff; }
```
